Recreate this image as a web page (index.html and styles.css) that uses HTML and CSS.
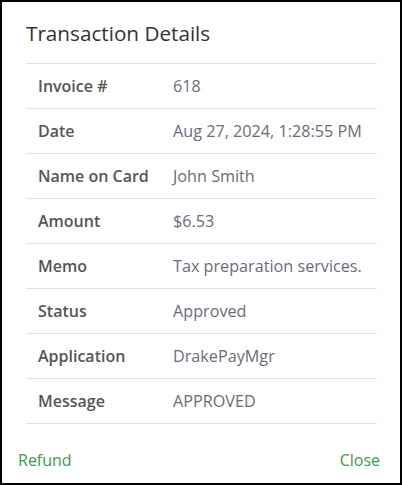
FILE: index.html
```html
<!DOCTYPE html>
<html>
<head>
    <title>Transaction Details</title>
    <meta charset="utf-8" />
    <link rel="stylesheet" href="styles.css">
</head>
<body>
    <div id="dialog">
        <header><h1>Transaction Details</h1></header>
        <main>
            <table class="details">
                <tr><th>Invoice #</th><td>618</td></tr>
                <tr><th>Date</th><td>Aug 27, 2024, 1:28:55 PM</td></tr>
                <tr><th>Name on Card</th><td>John Smith</td></tr>
                <tr><th>Amount</th><td>$6.53</td></tr>
                <tr><th>Memo</th><td>Tax preparation services.</td></tr>
                <tr><th>Status</th><td>Approved</td></tr>
                <tr><th>Application</th><td>DrakePayMgr</td></tr>
                <tr><th>Message</th><td>APPROVED</td></tr>
            </table>
        </main>
        <footer>
            <a href="#" class="action">Refund</a>
            <a href="#" class="action">Close</a>
        </footer>
    </div>
</body>
</html>
```

FILE: styles.css
```css
html, body {
    margin: 0;
    padding: 0;
    background-color: white;
}

body {
    font-family: "Open Sans", "Noto Sans", sans-serif;
}

#dialog {
    box-sizing: border-box;
    width: 402px;
    height: 485px;
    border: 2px solid black;
    display: flex;
    flex-direction: column;
}

header {
    padding: 18px 24px 0 24px;
}

header h1 {
    margin: 0;
    font-size: 20.7px;
    font-weight: 400;
    color: #333;
    line-height: 26px;
}

main {
    padding: 17px 23px 0 24px;
}

.details {
    width: 100%;
    border-collapse: collapse;
    border-top: 1px solid #e2e2e2;
}

.details tr {
    border-bottom: 1px solid #e2e2e2;
    height: 45px;
}

.details th {
    text-align: left;
    font-weight: 600;
    color: #555;
    font-size: 16px;
    padding: 0 0 0 12px;
    width: 135px;
}

.details td {
    color: #6b6b7d;
    font-size: 16.2px;
    padding: 0;
}

footer {
    margin-top: auto;
    padding: 0 20px 12px 16px;
    display: flex;
    justify-content: space-between;
}

.action {
    color: #3d9a4a;
    text-decoration: none;
    font-size: 16px;
}
```
